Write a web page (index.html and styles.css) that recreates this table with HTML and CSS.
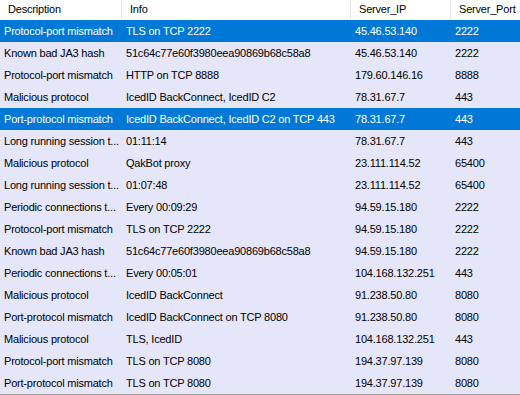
FILE: index.html
```html
<!DOCTYPE html>
<html>
<head>
<meta charset="utf-8">
<link rel="stylesheet" href="styles.css">
</head>
<body>
<div class="grid">
  <div class="head">
    <div class="hc">Description</div>
    <div class="hc">Info</div>
    <div class="hc">Server_IP</div>
    <div class="hc last">Server_Port</div>
  </div>
  <div class="row sel"><div>Protocol-port mismatch</div><div>TLS on TCP 2222</div><div>45.46.53.140</div><div>2222</div></div>
  <div class="row"><div>Known bad JA3 hash</div><div>51c64c77e60f3980eea90869b68c58a8</div><div>45.46.53.140</div><div>2222</div></div>
  <div class="row"><div>Protocol-port mismatch</div><div>HTTP on TCP 8888</div><div>179.60.146.16</div><div>8888</div></div>
  <div class="row"><div>Malicious protocol</div><div>IcedID BackConnect, IcedID C2</div><div>78.31.67.7</div><div>443</div></div>
  <div class="row sel"><div>Port-protocol mismatch</div><div>IcedID BackConnect, IcedID C2 on TCP 443</div><div>78.31.67.7</div><div>443</div></div>
  <div class="row"><div>Long running session t...</div><div>01:11:14</div><div>78.31.67.7</div><div>443</div></div>
  <div class="row"><div>Malicious protocol</div><div>QakBot proxy</div><div>23.111.114.52</div><div>65400</div></div>
  <div class="row"><div>Long running session t...</div><div>01:07:48</div><div>23.111.114.52</div><div>65400</div></div>
  <div class="row"><div>Periodic connections t...</div><div>Every 00:09:29</div><div>94.59.15.180</div><div>2222</div></div>
  <div class="row"><div>Protocol-port mismatch</div><div>TLS on TCP 2222</div><div>94.59.15.180</div><div>2222</div></div>
  <div class="row"><div>Known bad JA3 hash</div><div>51c64c77e60f3980eea90869b68c58a8</div><div>94.59.15.180</div><div>2222</div></div>
  <div class="row"><div>Periodic connections t...</div><div>Every 00:05:01</div><div>104.168.132.251</div><div>443</div></div>
  <div class="row"><div>Malicious protocol</div><div>IcedID BackConnect</div><div>91.238.50.80</div><div>8080</div></div>
  <div class="row"><div>Port-protocol mismatch</div><div>IcedID BackConnect on TCP 8080</div><div>91.238.50.80</div><div>8080</div></div>
  <div class="row"><div>Malicious protocol</div><div>TLS, IcedID</div><div>104.168.132.251</div><div>443</div></div>
  <div class="row"><div>Protocol-port mismatch</div><div>TLS on TCP 8080</div><div>194.37.97.139</div><div>8080</div></div>
  <div class="row"><div>Port-protocol mismatch</div><div>TLS on TCP 8080</div><div>194.37.97.139</div><div>8080</div></div>
</div>
</body>
</html>
```

FILE: styles.css
```css
html, body {
  margin: 0;
  padding: 0;
  width: 520px;
  height: 395px;
  overflow: hidden;
  background: #e6e6fa;
}
.grid {
  font-family: "Liberation Sans", Arial, sans-serif;
  font-size: 11px;
  letter-spacing: -0.2px;
  color: #000;
  height: 394px;
  border-bottom: 1px solid #a0a0a0;
  box-sizing: content-box;
}
.head, .row {
  display: grid;
  grid-template-columns: 122px 229px 100px 69px;
}
.head {
  height: 20px;
  background: #fff;
}
.hc {
  height: 19px;
  line-height: 19px;
  padding-left: 8px;
  border-right: 1px solid #e5e5e5;
  white-space: nowrap;
  overflow: hidden;
}
.hc.last {
  border-right: none;
}
.row {
  height: 22px;
  line-height: 22px;
}
.row > div {
  padding-left: 4px;
  white-space: nowrap;
  overflow: hidden;
}
.row.sel {
  background: #0078d7;
  color: #fff;
}
```
